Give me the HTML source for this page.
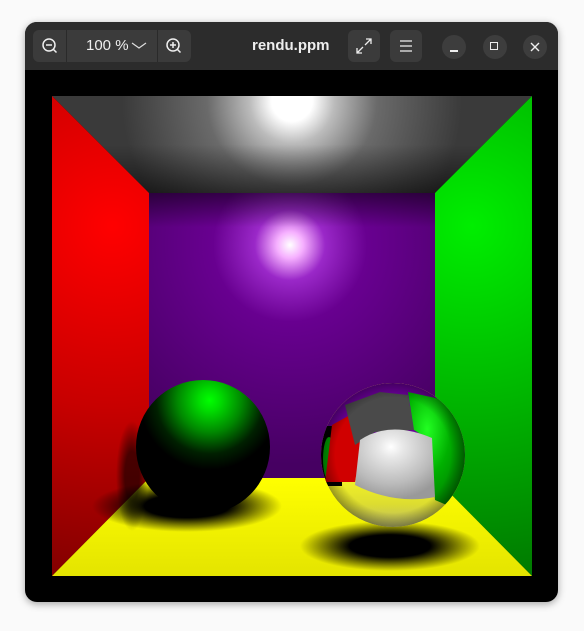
<!DOCTYPE html>
<html><head><style>
html,body{margin:0;padding:0;width:584px;height:631px;background:#fafafa;overflow:hidden;font-family:"Liberation Sans",sans-serif}
.win{position:absolute;left:25px;top:22px;width:533px;height:580px;border-radius:12px;background:#000;overflow:hidden;box-shadow:0 2px 8px rgba(0,0,0,.35)}
.hdr{position:absolute;left:0;top:0;width:533px;height:48px;background:#2c2c2c;color:#eee}
.btn{position:absolute;top:8px;height:32px;background:#3b3b3b;border-radius:6px}
.circ{position:absolute;top:13px;width:24px;height:24px;border-radius:50%;background:#3d3d3d}
svg{position:absolute}
</style></head><body>
<div class="win">
<div class="hdr">
 <div class="btn" style="left:8px;width:158px"></div>
 <div style="position:absolute;left:41px;top:8px;width:1px;height:32px;background:#2a2a2a"></div>
 <div style="position:absolute;left:132px;top:8px;width:1px;height:32px;background:#2a2a2a"></div>
 <svg style="left:16px;top:15px" width="18" height="18" viewBox="0 0 18 18" fill="none" stroke="#eee" stroke-width="1.5"><circle cx="8" cy="8" r="6"/><path d="M5 8h6M12.5 12.5l3 3"/></svg>
 <div style="position:absolute;left:61px;top:15px;font-size:15px">100 %</div>
 <svg style="left:106px;top:19px" width="16" height="10" viewBox="0 0 16 10" fill="none" stroke="#ddd" stroke-width="1.2"><path d="M1 2l7 5 7-5"/></svg>
 <svg style="left:140px;top:15px" width="18" height="18" viewBox="0 0 18 18" fill="none" stroke="#eee" stroke-width="1.5"><circle cx="8" cy="8" r="6"/><path d="M5 8h6M8 5v6M12.5 12.5l3 3"/></svg>
 <div style="position:absolute;left:227px;top:15px;font-size:15px;font-weight:bold">rendu.ppm</div>
 <div class="btn" style="left:323px;width:32px"></div>
 <svg style="left:331px;top:16px" width="16" height="16" viewBox="0 0 16 16" fill="none" stroke="#eee" stroke-width="1.3"><path d="M9 7l6-6M10 1h5v5M7 9l-6 6M1 10v5h5"/></svg>
 <div class="btn" style="left:365px;width:32px"></div>
 <svg style="left:373px;top:16px" width="16" height="16" viewBox="0 0 16 16" stroke="#eee" stroke-width="1.3"><path d="M2 3h12M2 8h12M2 13h12"/></svg>
 <div class="circ" style="left:417px"></div>
 <div style="position:absolute;left:425px;top:28px;width:8px;height:1.5px;background:#eee"></div>
 <div class="circ" style="left:458px"></div>
 <div style="position:absolute;left:465px;top:20px;width:8px;height:8px;border:1.3px solid #eee;box-sizing:border-box"></div>
 <div class="circ" style="left:498px"></div>
 <svg style="left:504px;top:19px" width="12" height="12" viewBox="0 0 12 12" stroke="#eee" stroke-width="1.4"><path d="M2 2l8 8M10 2l-8 8"/></svg>
</div>
<svg style="left:27px;top:74px" width="480" height="480" viewBox="0 0 480 480">
<defs>
 <radialGradient id="ceil" cx="240" cy="5" r="170" gradientUnits="userSpaceOnUse"><stop offset="0.12" stop-color="#fff"/><stop offset="0.25" stop-color="#bbb"/><stop offset="0.5" stop-color="#6a6a6a"/><stop offset="1" stop-color="#3a3a3a"/></radialGradient>
 <linearGradient id="ceilShade" x1="0" y1="0" x2="0" y2="1"><stop offset="0.5" stop-color="#000" stop-opacity="0"/><stop offset="1" stop-color="#000" stop-opacity="0.55"/></linearGradient>
 <radialGradient id="back" cx="238" cy="149" r="220" gradientUnits="userSpaceOnUse"><stop offset="0" stop-color="#fff"/><stop offset="0.06" stop-color="#f6b0ff"/><stop offset="0.16" stop-color="#9a28c8"/><stop offset="0.35" stop-color="#680090"/><stop offset="1" stop-color="#460062"/></radialGradient>
 <linearGradient id="backTop" x1="0" y1="0" x2="0" y2="1"><stop offset="0" stop-color="#000" stop-opacity="0.5"/><stop offset="0.12" stop-color="#000" stop-opacity="0"/></linearGradient>
 <radialGradient id="red" cx="60" cy="130" r="360" gradientUnits="userSpaceOnUse"><stop offset="0" stop-color="#ff0000"/><stop offset="0.5" stop-color="#c80000"/><stop offset="1" stop-color="#800000"/></radialGradient>
 <radialGradient id="grn" cx="420" cy="130" r="360" gradientUnits="userSpaceOnUse"><stop offset="0" stop-color="#00ee00"/><stop offset="0.5" stop-color="#00b400"/><stop offset="1" stop-color="#007800"/></radialGradient>
 <linearGradient id="flr" x1="0" y1="0" x2="0" y2="1"><stop offset="0" stop-color="#ffff00"/><stop offset="1" stop-color="#e4e400"/></linearGradient>
 <radialGradient id="gs" cx="0.55" cy="0.15" r="0.8"><stop offset="0" stop-color="#00ff00"/><stop offset="0.1" stop-color="#00dd00"/><stop offset="0.3" stop-color="#008800"/><stop offset="0.5" stop-color="#002000"/><stop offset="0.65" stop-color="#000"/></radialGradient>
 <radialGradient id="sh" cx="0.5" cy="0.5" r="0.5"><stop offset="0.45" stop-color="#000"/><stop offset="1" stop-color="#000" stop-opacity="0"/></radialGradient>
 <radialGradient id="wh" cx="0.45" cy="0.25" r="0.75"><stop offset="0" stop-color="#fff"/><stop offset="0.2" stop-color="#e8e8e8"/><stop offset="0.7" stop-color="#bbb"/><stop offset="1" stop-color="#999"/></radialGradient>
 <linearGradient id="yl" x1="0" y1="0" x2="0" y2="1"><stop offset="0.55" stop-color="#ffff20"/><stop offset="0.8" stop-color="#dddd30"/><stop offset="1" stop-color="#aaaa80"/></linearGradient>
 <radialGradient id="gg" cx="0.3" cy="0.3" r="0.9"><stop offset="0" stop-color="#22ff22"/><stop offset="0.4" stop-color="#00b000"/><stop offset="1" stop-color="#006000"/></radialGradient>
 <radialGradient id="edge" cx="0.5" cy="0.5" r="0.5"><stop offset="0.8" stop-color="#000" stop-opacity="0"/><stop offset="1" stop-color="#000" stop-opacity="0.35"/></radialGradient>
 <clipPath id="mc"><circle cx="341" cy="359" r="72"/></clipPath>
</defs>
<rect width="480" height="480" fill="#000"/>
<polygon points="0,0 480,0 383,97 97,97" fill="url(#ceil)"/>
<polygon points="0,0 480,0 383,97 97,97" fill="url(#ceilShade)"/>
<polygon points="0,0 97,97 97,382 0,480" fill="url(#red)"/>
<polygon points="480,0 383,97 383,382 480,480" fill="url(#grn)"/>
<rect x="97" y="97" width="286" height="285" fill="url(#back)"/>
<rect x="97" y="97" width="286" height="285" fill="url(#backTop)"/>
<polygon points="97,382 383,382 480,480 0,480" fill="url(#flr)"/>
<ellipse cx="135" cy="410" rx="95" ry="26" fill="url(#sh)"/>
<ellipse cx="80" cy="380" rx="16" ry="55" fill="url(#sh)" opacity="0.6"/>
<ellipse cx="338" cy="450" rx="90" ry="25" fill="url(#sh)"/>
<circle cx="151" cy="351" r="67" fill="url(#gs)"/>
<g clip-path="url(#mc)">
 <rect x="260" y="280" width="170" height="160" fill="url(#yl)"/>
 <rect x="260" y="280" width="170" height="100" fill="#6a0098"/>
 <rect x="260" y="330" width="30" height="60" fill="#000"/>
 <ellipse cx="277" cy="363" rx="6" ry="22" fill="#00a000"/>
 <path d="M280 329 L298 319 L311 344 L303 386 L273 386Z" fill="#d00000"/>
 <path d="M293 309 L328 296 L356 299 L362 334 L323 336 L303 349Z" fill="#4a4a4a"/>
 <path d="M356 296 L420 310 L420 420 L383 404 L378 344 L362 334Z" fill="url(#gg)"/>
 <path d="M308 344 Q338 324 380 342 L383 401 Q343 409 303 389Z" fill="url(#wh)"/>
 <circle cx="341" cy="359" r="72" fill="url(#edge)"/>
</g>
</svg>
</div>
</body></html>
